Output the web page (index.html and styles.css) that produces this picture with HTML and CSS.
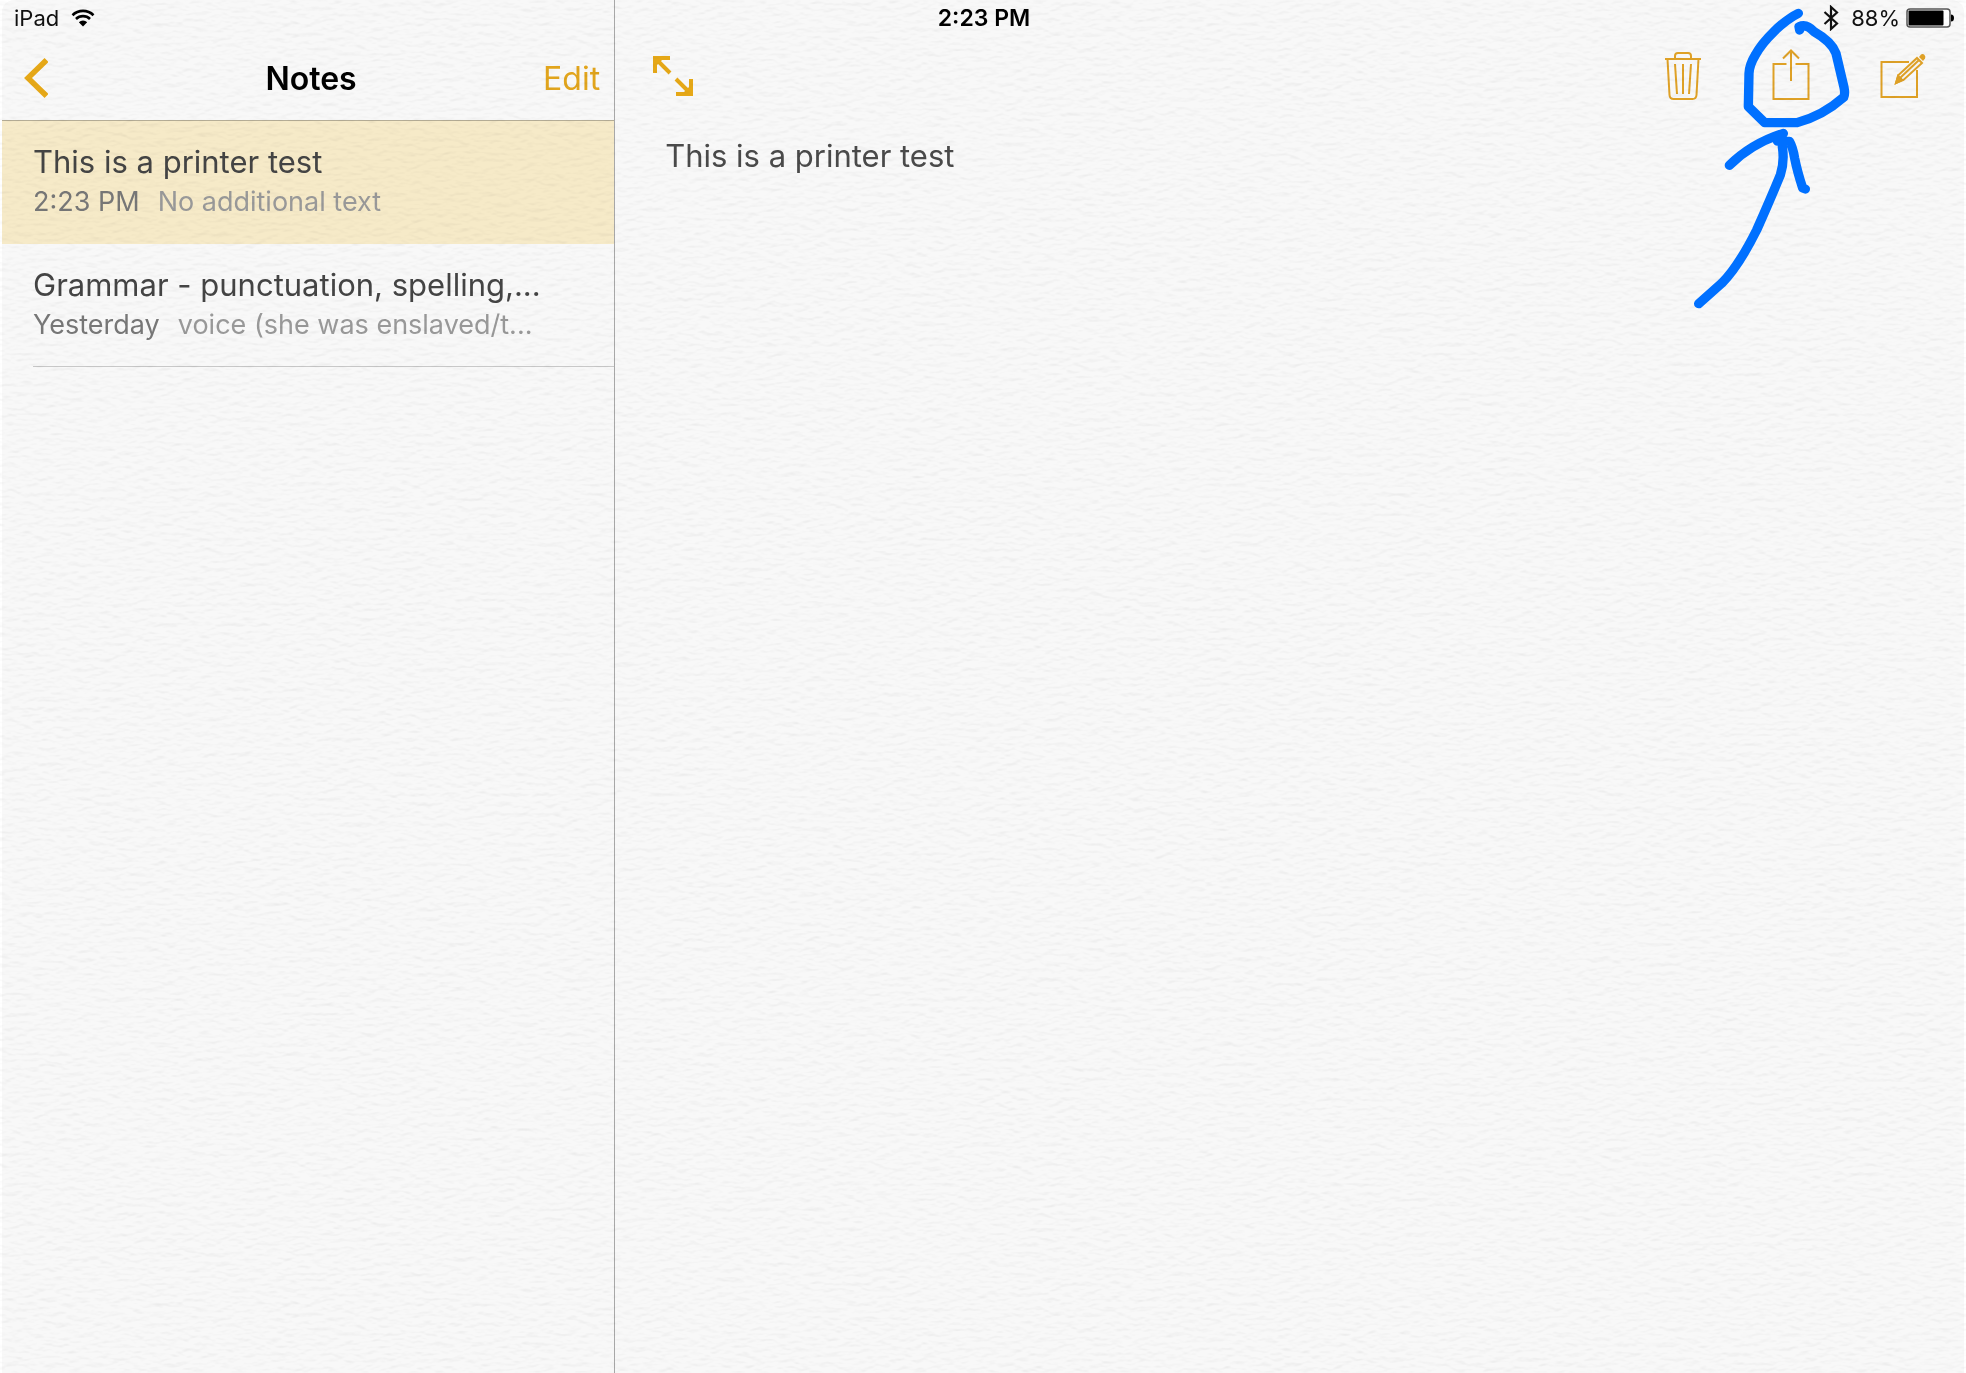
FILE: index.html
```html
<!DOCTYPE html>
<html lang="en">
<head>
    <meta charset="UTF-8">
    <meta name="viewport" content="width=device-width, initial-scale=1.0">
    <title>Notes</title>
    <link rel="stylesheet" href="styles.css">
</head>
<body>
<div class="app">
    <header class="status-bar">
        <div class="status-left">
            <span>iPad</span>
            <svg class="wifi" viewBox="0 0 24 18" aria-hidden="true">
                <path d="M1.5 6.2a15 15 0 0 1 21 0M5 10a10 10 0 0 1 14 0" fill="none" stroke="#000" stroke-width="2.6"/>
                <path d="M12 17.5 7.8 13.2a6 6 0 0 1 8.4 0z" fill="#000"/>
            </svg>
        </div>
        <div class="status-time">2:23 PM</div>
        <div class="status-right">
            <svg class="bluetooth" viewBox="0 0 16 26" aria-hidden="true">
                <path d="M1.5 7 14 18.5 8 24V2l6 5.500L1.500 19" fill="none" stroke="#111" stroke-width="2.2"/>
            </svg>
            <span>88%</span>
            <svg class="battery" viewBox="0 0 48 20" aria-hidden="true">
                <rect x="1" y="1" width="43" height="18" rx="3" fill="#fff" stroke="#555" stroke-width="1.500"/>
                <rect x="2.500" y="2.500" width="35" height="15" rx="1" fill="#000"/>
                <path d="M45 6.500q3 0 3 3.500t-3 3.500z" fill="#000"/>
            </svg>
        </div>
    </header>

    <aside class="sidebar">
        <div class="sidebar-header">
            <button class="icon-btn back" aria-label="Back">
                <svg viewBox="0 0 26 42" width="26" height="42"><path d="M24.500 3 6 21l18.500 18" fill="none" stroke="#e6a817" stroke-width="5.500"/></svg>
            </button>
            <h1>Notes</h1>
            <button class="edit-btn">Edit</button>
        </div>
        <ul class="note-list">
            <li class="note selected">
                <a href="#">
                    <span class="note-title">This is a printer test</span>
                    <span class="note-meta"><span class="note-date">2:23 PM</span>No additional text</span>
                </a>
            </li>
            <li class="note">
                <a href="#">
                    <span class="note-title">Grammar - punctuation, spelling,...</span>
                    <span class="note-meta"><span class="note-date">Yesterday</span>voice (she was enslaved/t...</span>
                </a>
            </li>
        </ul>
    </aside>

    <main class="editor">
        <div class="toolbar">
            <button class="icon-btn" aria-label="Full screen">
                <svg viewBox="0 0 40 40" width="40" height="40" fill="none" stroke="#e6a817" stroke-width="4">
                    <path d="M2 17V2h15M2 2l15 15M23 23l15 15M38 23v15H23"/>
                    <path d="M2 2h9l-9 9zM38 38h-9l9-9z" fill="#e6a817" stroke="none"/>
                </svg>
            </button>
            <div class="toolbar-actions">
                <button class="icon-btn" aria-label="Delete note">
                    <svg viewBox="0 0 38 50" width="38" height="50" fill="none" stroke="#dfa126" stroke-width="2">
                        <path d="M1 8h36M11 8V5q0-3 3-3h10q3 0 3 3v3M3.500 8l2 36q.3 4 4 4h19q3.700 0 4-4l2-36M11 13l2 30M19 13v30M27 13l-2 30"/>
                    </svg>
                </button>
                <button class="icon-btn" aria-label="Share note">
                    <svg viewBox="0 0 38 54" width="38" height="54" fill="none" stroke="#dfa126" stroke-width="2">
                        <path d="M14.500 15H1.500v35h35V15h-13M19 32V1.500M11 9.500l8-8 8 8"/>
                    </svg>
                </button>
                <button class="icon-btn" aria-label="New note">
                    <svg viewBox="0 0 46 46" width="46" height="46" fill="none" stroke="#dfa126" stroke-width="2">
                        <path d="M29 9H1.500v35H37V17"/>
                        <path d="M16 30l2.500-8L37 5l5 5-18.500 17z" fill="#f6f6f6"/>
                        <path d="M20 25 38.500 7.500M16 30l2-7 4 4z"/>
                        <path d="m39 4 2-2.500q2-1 3.500.5t.5 3.500l-2 2.500z" fill="#dfa126" stroke="none"/>
                        <path d="m15 31 3-9 5.500 5z" fill="#dfa126" stroke="none"/>
                    </svg>
                </button>
            </div>
        </div>
        <textarea class="note-body" aria-label="Note text" spellcheck="false">This is a printer test</textarea>
    </main>
</div>

<!-- paper grain over the whole app -->
<svg class="paper" aria-hidden="true">
    <filter id="grain" x="0" y="0" width="100%" height="100%" color-interpolation-filters="sRGB">
        <feTurbulence type="fractalNoise" baseFrequency="0.09 0.2" numOctaves="2" seed="4"/>
        <feColorMatrix values="0 0 0 0 0  0 0 0 0 0  0 0 0 0 0  1 0 0 0 0"/>
        <feDiffuseLighting surfaceScale="0.16" diffuseConstant="1.15" lighting-color="#fff">
            <feDistantLight azimuth="270" elevation="60"/>
        </feDiffuseLighting>
    </filter>
    <rect width="100%" height="100%" filter="url(#grain)"/>
</svg>

<!-- hand drawn marker pointing at the share button -->
<svg class="marker" viewBox="0 0 978 960" aria-hidden="true">
    <g fill="none" stroke="#0070ff" stroke-width="28" stroke-linecap="round" stroke-linejoin="round">
        <path d="M475 40C430 62 370 120 346 165Q328 195 327 220L325 320 374 368H470Q545 350 611 292Q616 282 612 262L588 160Q575 125 522 95Q500 70 477 80L479 90"/>
        <path d="M176 911L245 850Q295 800 350 690Q390 600 421 525Q434 485 427 440"/>
        <path d="M268 496Q335 430 430 400L412 423 448 424Q458 440 464 475Q472 515 488 564L496 567"/>
    </g>
</svg>
</body>
</html>
```

FILE: styles.css
```css
* {
    box-sizing: border-box;
}
body {
    margin: 0;
    background-color: #fff;
    font-family: Inter, "Liberation Sans", sans-serif;
    color: #444;
}
button {
    font: inherit;
    background: none;
    border: none;
    padding: 0;
    cursor: pointer;
}
svg {
    display: block;
}
.app {
    display: grid;
    grid-template-columns: 5fr 11fr;
    grid-template-rows: 36px 1fr;
    min-height: 100vh;
    margin: 0 2px;
    background-color: #f8f8f8;
    border-radius: 12px 12px 0 0;
    overflow: hidden;
}

/* status bar sits across both columns */
.status-bar {
    grid-area: 1 / 1 / 2 / 3;
    display: grid;
    grid-template-columns: 1fr auto 1fr;
    align-items: center;
    padding: 0 10px 0 12px;
    font-size: 22px;
    color: #111;
}
.status-left, .status-right {
    display: flex;
    align-items: center;
    gap: 12px;
}
.status-right {
    justify-content: flex-end;
    gap: 6px;
}
.status-time {
    font-size: 23px;
    font-weight: 600;
    color: #000;
}
.wifi {
    width: 24px;
    height: 18px;
}
.bluetooth {
    width: 16px;
    height: 26px;
    margin-right: 6px;
}
.battery {
    width: 48px;
    height: 20px;
}

/* note list */
.sidebar {
    grid-area: 1 / 1 / 3 / 2;
    padding-top: 36px;
    border-right: 1px solid #a8a8a8;
}
.sidebar-header {
    display: grid;
    grid-template-columns: 1fr auto 1fr;
    align-items: center;
    height: 85px;
    padding: 0 14px 0 20px;
    border-bottom: 1px solid #b5ad96;
    font-size: 32px;
}
.sidebar-header h1 {
    margin: 0;
    font-size: 32px;
    font-weight: 600;
    color: #000;
}
.back {
    justify-self: start;
}
.edit-btn {
    justify-self: end;
    color: #e2a51c;
}
.note-list {
    list-style: none;
    margin: 0;
    padding: 0;
}
.note {
    padding-left: 31px;
}
.note a {
    display: block;
    padding: 21px 0;
    border-bottom: 1px solid #c8c8c8;
    color: #999;
    text-decoration: none;
    white-space: nowrap;
    overflow: hidden;
}
.note.selected {
    background-color: #f6eac8;
}
.note.selected a {
    border-bottom-color: transparent;
}
.note-title {
    display: block;
    font-size: 31px;
    line-height: 40px;
    color: #444;
}
.note-meta {
    display: block;
    font-size: 27px;
    line-height: 40px;
}
.note-date {
    margin-right: 18px;
    color: #777;
}

/* open note */
.editor {
    grid-area: 1 / 2 / 3 / 3;
    display: flex;
    flex-direction: column;
    padding-top: 36px;
}
.toolbar {
    display: flex;
    align-items: center;
    justify-content: space-between;
    height: 80px;
    padding: 0 38px;
}
.toolbar-actions {
    display: flex;
    align-items: center;
    gap: 70px;
}
.note-body {
    flex: 1;
    width: 100%;
    padding: 20px 50px;
    border: none;
    outline: none;
    resize: none;
    background: none;
    font: inherit;
    font-size: 31px;
    line-height: 40px;
    color: #4a4a4a;
}

/* overlays */
.paper, .marker {
    position: absolute;
    top: 0;
    right: 0;
    pointer-events: none;
}
.paper {
    width: 100%;
    height: 100%;
    mix-blend-mode: multiply;
}
.marker {
    width: 326px;
    height: 320px;
}
```
